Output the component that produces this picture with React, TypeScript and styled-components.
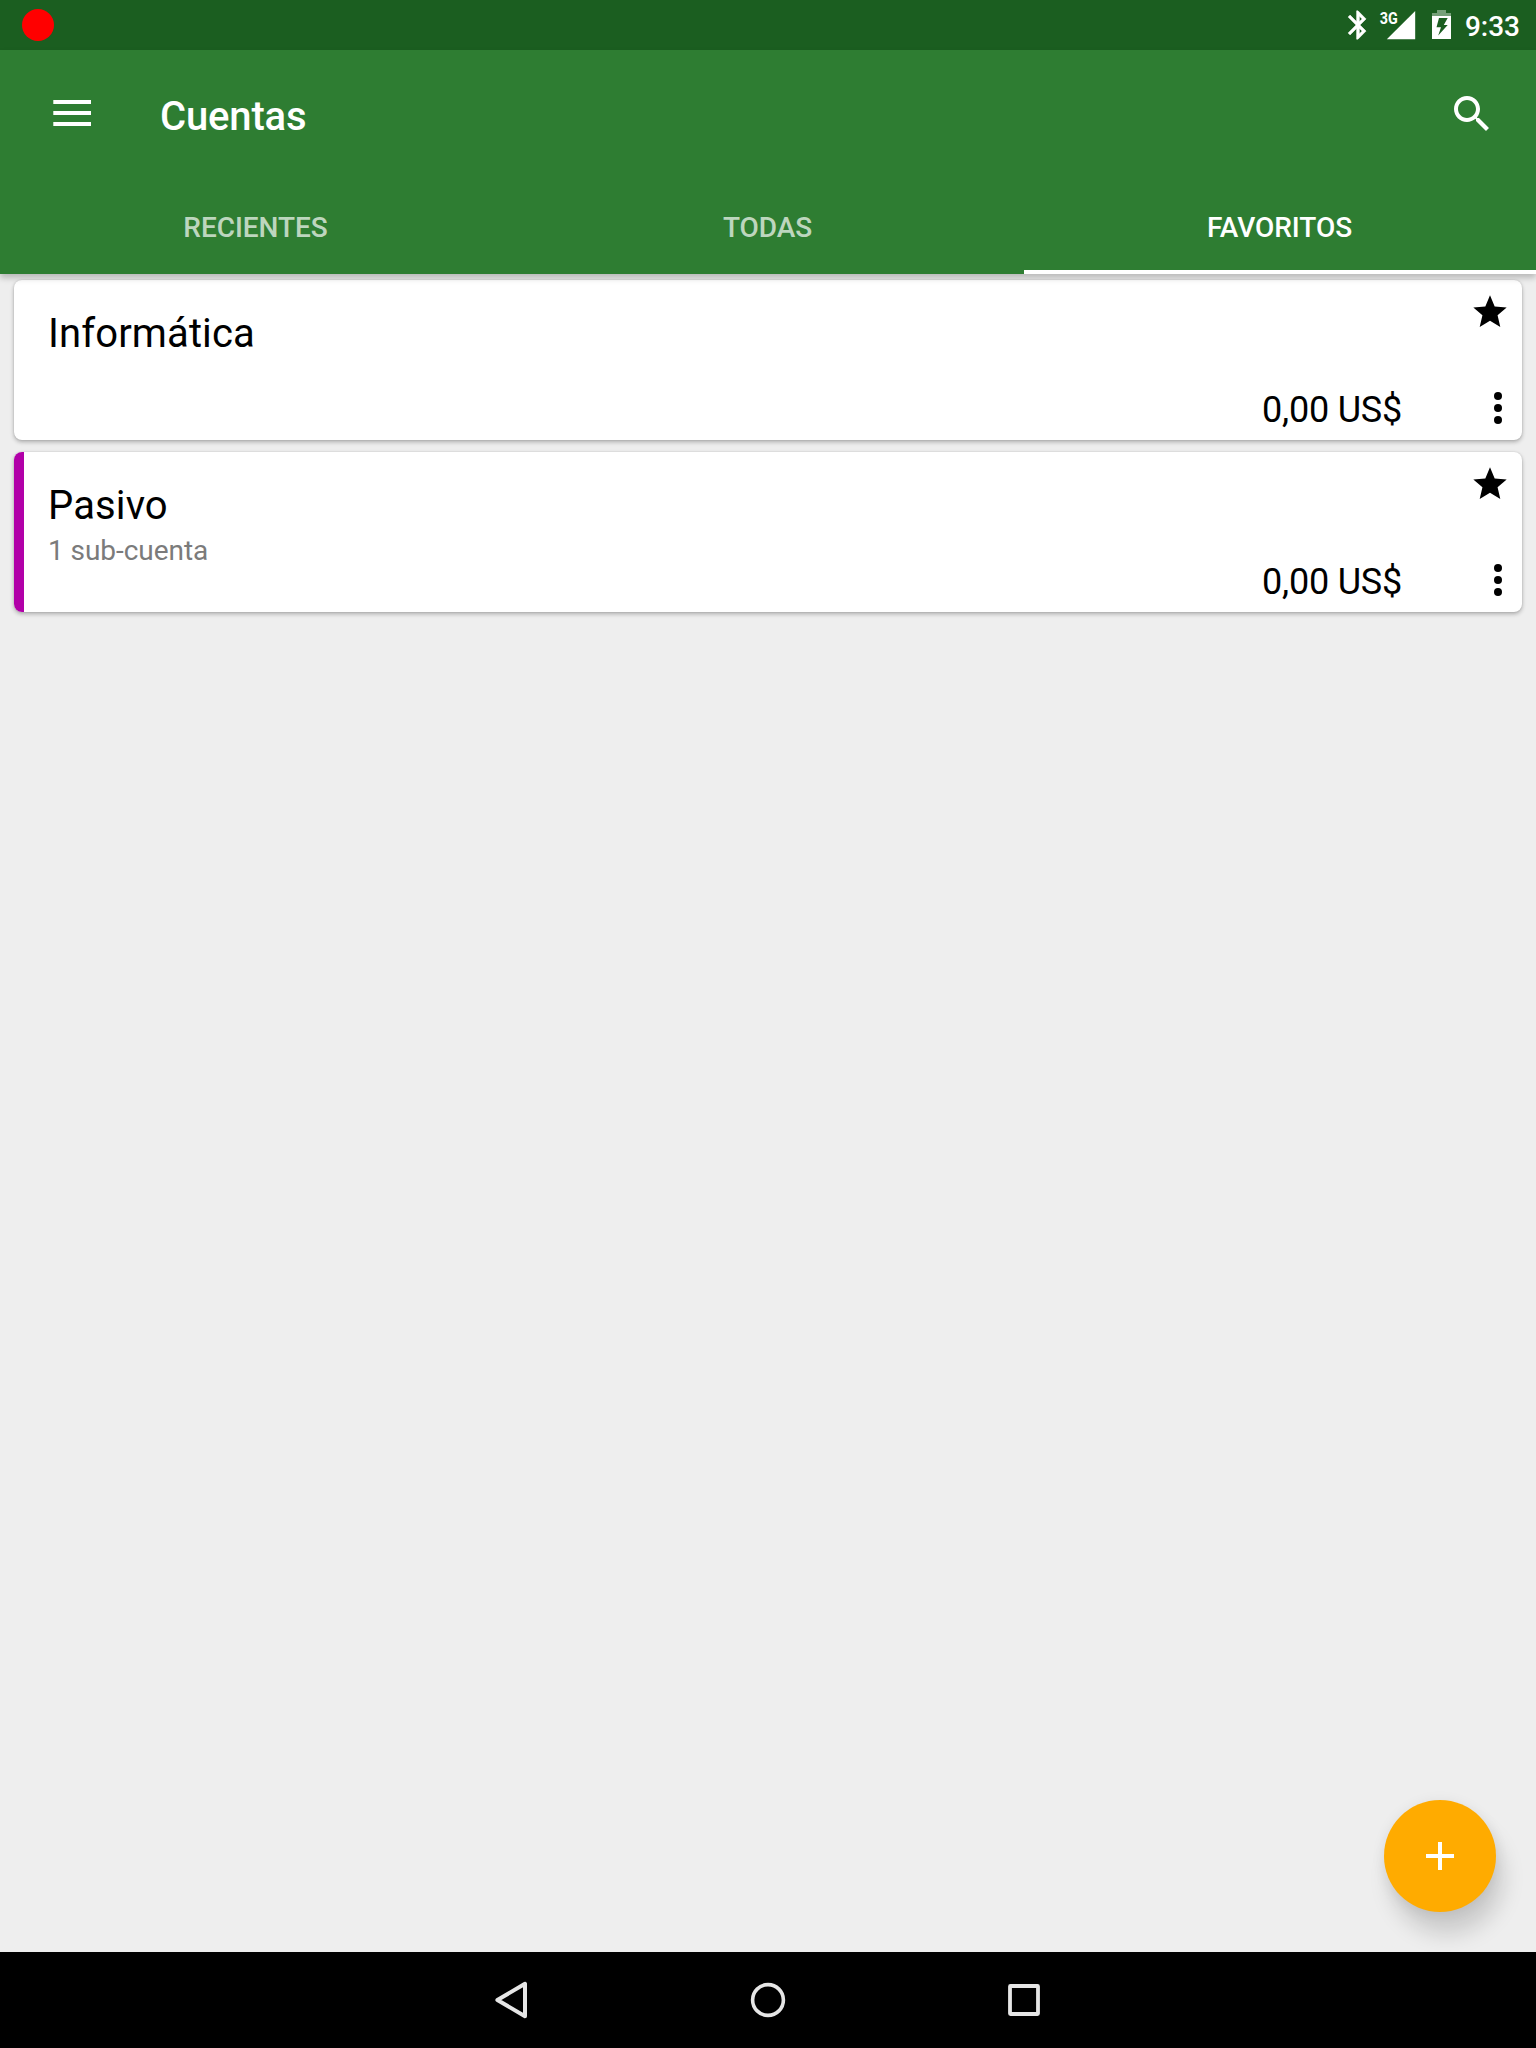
import React from "react";
import styled, { createGlobalStyle } from "styled-components";

const GlobalStyle = createGlobalStyle`
  *, *::before, *::after { box-sizing: border-box; }
  html, body { margin: 0; padding: 0; }
  body { background: #eeeeee; font-family: Roboto, "Noto Sans", sans-serif; }
  svg { display: block; flex: none; }
`;

const Screen = styled.div`
  position: relative;
  display: flex;
  flex-direction: column;
  width: 1536px;
  height: 2048px;
  overflow: hidden;
  background: #eeeeee;
`;

const StatusBar = styled.div`
  display: flex;
  align-items: center;
  height: 50px;
  padding: 0 16px 0 22px;
  background: #1b5e20;
`;

const RecordDot = styled.span`
  width: 32px;
  height: 32px;
  margin-right: auto;
  border-radius: 50%;
  background: #ff0000;
`;

const StatusIcon = styled.span<{ $gap: number }>`
  display: flex;
  margin-right: ${(p) => p.$gap}px;
`;

const Clock = styled.time`
  padding-top: 3px;
  font-size: 28px;
  line-height: 34px;
  font-weight: 500;
  color: #fff;
`;

const AppBar = styled.header`
  position: relative;
  z-index: 1;
  height: 224px;
  color: #fff;
  background: #2e7d32;
  box-shadow: 0 4px 6px rgba(0, 0, 0, 0.22);
`;

const Toolbar = styled.div`
  display: flex;
  align-items: center;
  height: 128px;
  padding: 0 40px 0 53px;
`;

const IconButton = styled.button`
  display: flex;
  padding: 0;
  border: 0;
  background: none;
  color: inherit;
`;

const Title = styled.h1`
  flex: 1;
  margin: 0;
  padding: 5px 0 0 69px;
  font-size: 40px;
  line-height: 48px;
  font-weight: 500;
  letter-spacing: -0.15px;
`;

const Tabs = styled.nav`
  display: grid;
  grid-template-columns: repeat(3, 1fr);
  height: 96px;
`;

const Tab = styled.a<{ $active?: boolean }>`
  display: flex;
  align-items: center;
  justify-content: center;
  padding: 8px 1px 0 0;
  border-bottom: 4px solid ${(p) => (p.$active ? "#fff" : "transparent")};
  font-size: 28px;
  line-height: 34px;
  font-weight: 500;
  letter-spacing: -0.05px;
  color: ${(p) => (p.$active ? "#fff" : "rgba(255, 255, 255, 0.7)")};
`;

const AccountList = styled.main`
  display: flex;
  flex: 1;
  flex-direction: column;
  gap: 12px;
  padding: 6px 14px;
`;

const Card = styled.article`
  display: flex;
  height: 160px;
  border-radius: 8px;
  background: #fff;
  box-shadow: 0 2px 4px rgba(0, 0, 0, 0.28), 0 0 2px rgba(0, 0, 0, 0.12);
`;

const Stripe = styled.span<{ $color: string }>`
  width: 10px;
  border-radius: 8px 0 0 8px;
  background: ${(p) => p.$color};
`;

const CardText = styled.div`
  display: flex;
  flex: 1;
  flex-direction: column;
  gap: 5px;
  padding: 30px 0 0 24px;
`;

const Name = styled.h2`
  margin: 0;
  font-size: 40px;
  line-height: 47px;
  font-weight: 400;
  letter-spacing: 0.12px;
  color: #000;
`;

const Detail = styled.span`
  font-size: 28px;
  line-height: 33px;
  letter-spacing: -0.05px;
  color: #7b7b7b;
`;

const Amount = styled.span`
  align-self: flex-end;
  padding-bottom: 9px;
  font-size: 36px;
  line-height: 42px;
  letter-spacing: -0.22px;
  color: #000;
`;

const Actions = styled.div`
  display: flex;
  flex-direction: column;
  align-items: flex-end;
  justify-content: space-between;
  width: 120px;
  padding: 12px 12px 16px 0;
`;

const MenuButton = styled(IconButton)`
  margin-right: 8px;
  color: #000;
`;

const Fab = styled.button`
  position: absolute;
  right: 40px;
  bottom: 136px;
  display: flex;
  align-items: center;
  justify-content: center;
  width: 112px;
  height: 112px;
  padding: 0;
  border: 0;
  border-radius: 50%;
  background: #ffab00;
  box-shadow: 7px 22px 22px rgba(0, 0, 0, 0.15), 0 2px 14px rgba(0, 0, 0, 0.08);
`;

const NavBar = styled.footer`
  position: relative;
  display: flex;
  align-items: center;
  justify-content: center;
  height: 96px;
  background: #000;
`;

const NavButton = styled(IconButton)`
  justify-content: center;
  width: 256px;
  color: #e6e6e6;
`;

const accounts = [
  { name: "Informática", detail: "", amount: "0,00 US$", color: "transparent" },
  { name: "Pasivo", detail: "1 sub-cuenta", amount: "0,00 US$", color: "#b100a8" },
];

const tabs = ["RECIENTES", "TODAS", "FAVORITOS"];

export default function App() {
  return (
    <Screen>
      <GlobalStyle />
      <StatusBar>
        <RecordDot />
        <StatusIcon $gap={4}>
          <svg width="34" height="34" viewBox="0 0 24 24" fill="#fff" stroke="#fff" strokeWidth="0.35">
            <path d="M17.71 7.71L12 2h-1v7.59L6.41 5 5 6.41 10.59 12 5 17.59 6.41 19 11 14.41V22h1l5.71-5.71-4.3-4.29 4.3-4.29zM13 5.83l1.88 1.88L13 9.59V5.83zm1.88 10.46L13 18.17v-3.76l1.88 1.88z" />
          </svg>
        </StatusIcon>
        <StatusIcon $gap={14}>
          <svg width="39" height="34" viewBox="0 0 39 34" fill="#fff">
            <path d="M7.8 31.3H36.2V3z" />
            <text x="0.8" y="15.6" fontSize="17" fontWeight="700" textLength="18" lengthAdjust="spacingAndGlyphs">3G</text>
          </svg>
        </StatusIcon>
        <StatusIcon $gap={14}>
          <svg width="19" height="34" viewBox="0 0 19 34" fill="#fff">
            <path fill="#76a079" d="M5 2h9v3h5v3H0V5h5z" />
            <path fillRule="evenodd" d="M0 8h19v23H0zM7 10 4.5 19.3H9L6.2 27.5 15.7 17H11.8L15.7 10z" />
          </svg>
        </StatusIcon>
        <Clock>9:33</Clock>
      </StatusBar>

      <AppBar>
        <Toolbar>
          <IconButton aria-label="Menú">
            <svg width="38" height="28" viewBox="0 0 38 28" fill="#fff">
              <path d="M.3 0H38v4H.3zM.3 11H38v4H.3zM.3 22H38v4H.3z" />
            </svg>
          </IconButton>
          <Title>Cuentas</Title>
          <IconButton aria-label="Buscar">
            <svg width="48" height="48" viewBox="0 0 24 24" fill="#fff">
              <path d="M15.5 14h-.79l-.28-.27C15.41 12.59 16 11.11 16 9.5 16 5.91 13.09 3 9.5 3S3 5.91 3 9.5 5.91 16 9.5 16c1.61 0 3.09-.59 4.23-1.57l.27.28v.79l5 4.99L20.49 19l-4.99-5zm-6 0C7.01 14 5 11.99 5 9.5S7.01 5 9.5 5 14 7.01 14 9.5 11.99 14 9.5 14z" />
            </svg>
          </IconButton>
        </Toolbar>
        <Tabs>
          {tabs.map((tab, i) => (
            <Tab key={tab} $active={i === 2}>{tab}</Tab>
          ))}
        </Tabs>
      </AppBar>

      <AccountList>
        {accounts.map((account) => (
          <Card key={account.name}>
            <Stripe $color={account.color} />
            <CardText>
              <Name>{account.name}</Name>
              {account.detail && <Detail>{account.detail}</Detail>}
            </CardText>
            <Amount>{account.amount}</Amount>
            <Actions>
              <IconButton aria-label="Favorito">
                <svg width="40" height="40" viewBox="0 0 24 24" fill="#000">
                  <path d="M12 17.27L18.18 21l-1.64-7.03L22 9.24l-7.19-.61L12 2 9.19 8.63 2 9.24l5.46 4.73L5.82 21z" />
                </svg>
              </IconButton>
              <MenuButton aria-label="Más opciones">
                <svg width="8" height="32" viewBox="0 0 8 32">
                  <circle cx="4" cy="4" r="4" />
                  <circle cx="4" cy="16" r="4" />
                  <circle cx="4" cy="28" r="4" />
                </svg>
              </MenuButton>
            </Actions>
          </Card>
        ))}
      </AccountList>

      <Fab aria-label="Añadir cuenta">
        <svg width="28" height="28" viewBox="0 0 28 28" fill="#fff">
          <path d="M12 0h4v12h12v4H16v12h-4V16H0v-4h12z" />
        </svg>
      </Fab>

      <NavBar>
        <NavButton aria-label="Atrás">
          <svg width="36" height="40" viewBox="0 0 36 40" fill="none" stroke="currentColor" strokeWidth="4" strokeLinejoin="round">
            <path d="M31 3.8V36.2L3.4 20z" />
          </svg>
        </NavButton>
        <NavButton aria-label="Inicio">
          <svg width="36" height="36" viewBox="0 0 36 36" fill="none" stroke="currentColor" strokeWidth="3.6">
            <circle cx="18" cy="18" r="15.4" />
          </svg>
        </NavButton>
        <NavButton aria-label="Recientes">
          <svg width="36" height="36" viewBox="0 0 36 36" fill="none" stroke="currentColor" strokeWidth="3.8" strokeLinejoin="round">
            <rect x="4" y="4" width="28" height="28" rx="0.5" />
          </svg>
        </NavButton>
      </NavBar>
    </Screen>
  );
}
